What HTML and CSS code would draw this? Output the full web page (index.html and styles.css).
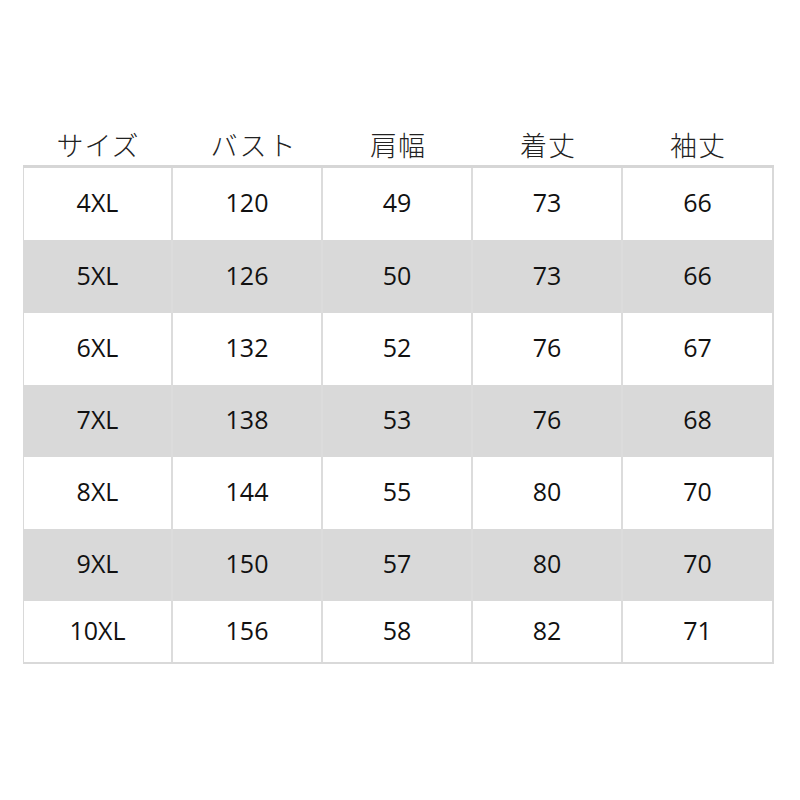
FILE: index.html
```html
<!DOCTYPE html>
<html lang="ja">
<head>
<meta charset="utf-8">
<link rel="stylesheet" href="styles.css">
</head>
<body>
<div class="sheet">
  <div class="head">
    <div class="hcell">サイズ</div>
    <div class="hcell shift">バスト</div>
    <div class="hcell">肩幅</div>
    <div class="hcell">着丈</div>
    <div class="hcell">袖丈</div>
  </div>
  <div class="table">
    <div class="row"><div class="cell">4XL</div><div class="cell">120</div><div class="cell">49</div><div class="cell">73</div><div class="cell">66</div></div>
    <div class="row alt tall"><div class="cell">5XL</div><div class="cell">126</div><div class="cell">50</div><div class="cell">73</div><div class="cell">66</div></div>
    <div class="row"><div class="cell">6XL</div><div class="cell">132</div><div class="cell">52</div><div class="cell">76</div><div class="cell">67</div></div>
    <div class="row alt"><div class="cell">7XL</div><div class="cell">138</div><div class="cell">53</div><div class="cell">76</div><div class="cell">68</div></div>
    <div class="row"><div class="cell">8XL</div><div class="cell">144</div><div class="cell">55</div><div class="cell">80</div><div class="cell">70</div></div>
    <div class="row alt"><div class="cell">9XL</div><div class="cell">150</div><div class="cell">57</div><div class="cell">80</div><div class="cell">70</div></div>
    <div class="row last"><div class="cell">10XL</div><div class="cell">156</div><div class="cell">58</div><div class="cell">82</div><div class="cell">71</div></div>
  </div>
</div>
</body>
</html>
```

FILE: styles.css
```css
html, body {
  margin: 0;
  padding: 0;
  background: #ffffff;
}

.sheet {
  padding: 126px 0 0 23px;
  width: 751px;
}

.head {
  display: grid;
  grid-template-columns: repeat(5, 150px);
  height: 39px;
  border-bottom: 3px solid #d6d6d6;
}

.hcell {
  display: flex;
  align-items: center;
  justify-content: center;
  font-family: "Noto Sans CJK JP", sans-serif;
  font-weight: 300;
  font-size: 27px;
  letter-spacing: 1px;
  color: #222;
  line-height: 1;
  padding-bottom: 2px;
}

.hcell.shift {
  padding-left: 12px;
  letter-spacing: 2px;
}

.table {
  border-left: 1px solid #d9d9d9;
  border-right: 2px solid #d9d9d9;
  border-bottom: 2px solid #d9d9d9;
  width: 748px;
}

.row {
  display: grid;
  grid-template-columns: 149px 150px 150px 150px 149px;
  height: 72px;
}

.row.tall {
  height: 73px;
}

.row.last {
  height: 61px;
}

.row.alt {
  background: #d9d9d9;
}

.cell {
  display: flex;
  align-items: center;
  justify-content: center;
  font-family: "Open Sans", "Noto Sans", sans-serif;
  font-size: 25px;
  line-height: 1;
  color: #111;
  border-right: 2px solid #dcdcdc;
  padding-bottom: 3px;
}

.cell:last-child {
  border-right: none;
}

.row.last .cell {
  padding-bottom: 3px;
}
```
